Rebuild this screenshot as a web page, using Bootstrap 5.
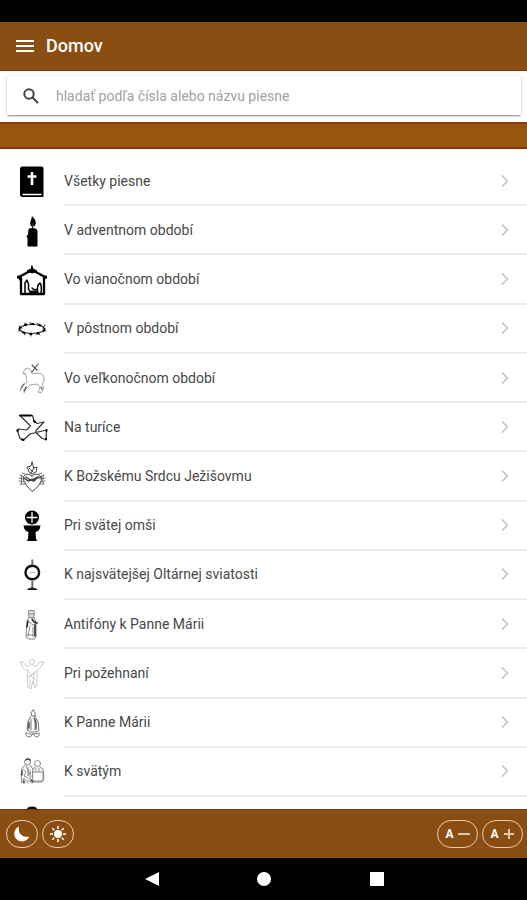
<!DOCTYPE html>
<html lang="sk">
<head>
<meta charset="utf-8">
<meta name="viewport" content="width=device-width, initial-scale=1">
<title>Domov</title>
<link href="https://cdn.jsdelivr.net/npm/bootstrap@5.3.0/dist/css/bootstrap.min.css" rel="stylesheet">
<style>
body{font-family:Roboto,"Noto Sans",sans-serif;font-size:14px;line-height:20px;color:#484848;background:#fff}
.status-strip{height:22px;background:#000}
.brown{background:#8a4d12;color:#fff}
.app-head{height:49px;padding:0 16px;gap:12px;border-bottom:1px solid #7a3205}
.app-title{font-size:18px;line-height:24px;font-weight:500}
.plain-btn{background:none;border:0;padding:0;color:inherit;display:flex}
.search-wrap{padding:5px 6px 7px 7px;height:51px}
.search-box{border-radius:2px;padding:0 16px;gap:17px;box-shadow:0 2px 1px -1px #999,0 1px 3px #bbb}
.search-box input{font-size:14px;line-height:20px;color:#444;outline:0}
.search-box input::placeholder{color:#a2a2a2;opacity:1}
.section-bar{height:27px;background:#99540f;border-top:2px solid #883a08;border-bottom:2px solid #883a08}
.song-list{padding-top:8px}
.song-list li{flex:1 0 49px}
.song-list li:last-child{flex:0 0 12px;overflow:hidden}
.song-link{padding-left:16px;gap:16px;color:inherit}
.song-link .pic{width:32px;height:32px;fill:none;stroke:#000;stroke-linecap:round;stroke-linejoin:round}
.song-label{border-bottom:2px solid #ededed;padding-right:17px}
.chev{width:12px;height:14px;fill:none;stroke:#c2c2c2;stroke-width:1.5}
.app-foot{height:49px;padding:0 4px 0 6px;border-top:1px solid #7a3205}
.round-btn{height:28px;border:1px solid #e9cdb5;border-radius:14px;background:none;color:#fff;padding:0;display:flex;align-items:center;justify-content:center;font-size:12px;font-weight:700;gap:4px}
.mode-btn{width:32px}
.size-btn{width:41px}
.sys-nav{height:42px;background:#000;padding:0 94px 0 96px}
.sys-nav svg{fill:#fff}
</style>
<script src="https://cdn.jsdelivr.net/npm/bootstrap@5.3.0/dist/js/bootstrap.bundle.min.js"></script>
</head>
<body>
<div class="d-flex flex-column vh-100 overflow-hidden">
<div class="status-strip flex-shrink-0"></div>
<header class="brown app-head d-flex align-items-center flex-shrink-0">
<button class="plain-btn" type="button" aria-label="Menu"><svg width="18" height="14" viewBox="0 0 18 14" stroke="#fff" stroke-width="2"><path d="M0 2h18M0 7h18M0 12h18"/></svg></button>
<h1 class="app-title m-0">Domov</h1>
</header>
<form class="search-wrap flex-shrink-0" role="search">
<label class="search-box d-flex align-items-center h-100 bg-white">
<svg width="16" height="16" viewBox="0 0 16 16" fill="none" stroke="#444" stroke-width="2"><circle cx="6" cy="6" r="4.7"/><path d="M9.5 9.5l5.500 5.500"/></svg>
<input class="border-0 p-0 flex-grow-1 bg-transparent" type="text" aria-label="Hľadať pieseň" placeholder="hladať podľa čísla alebo názvu piesne">
</label>
</form>
<div class="section-bar flex-shrink-0"></div>
<main class="flex-grow-1 overflow-hidden d-flex flex-column">
<ul class="song-list list-unstyled m-0 d-flex flex-column flex-grow-1">
<li class="d-flex"><a href="#" class="song-link d-flex align-items-center w-100 text-decoration-none">
<svg class="pic" viewBox="0 0 32 32"><path fill="#000" stroke="none" d="M6 .5h19.500q2 0 2 2V31H6.500Q4 31 4 28V3Q4 .5 6 .5z"/><path stroke="#fff" stroke-width="1.500" d="M6.500 28.500h19" stroke-linecap="butt"/><path stroke="#fff" stroke-width="2.600" d="M16 6v13M11.500 10.500h9" stroke-linecap="butt"/></svg>
<span class="song-label d-flex align-items-center justify-content-between flex-grow-1 align-self-stretch">Všetky piesne<svg class="chev" viewBox="0 0 12 14"><path d="M4 1.500L9.500 7 4 12.500"/></svg></span></a></li>
<li class="d-flex"><a href="#" class="song-link d-flex align-items-center w-100 text-decoration-none">
<svg class="pic" viewBox="0 0 32 32"><path fill="#000" stroke="none" d="M12.500 14q3.500-1.800 8 0l1 2v15.500H11.500V23l-1-1.500 1.500-2z"/><path fill="#000" stroke="none" d="M16 1c4 4 5.500 8 1.500 11l-.5-4-1.300 3.500C12.500 9 15.500 5 16 1z"/><path d="M16.700 9v5"/></svg>
<span class="song-label d-flex align-items-center justify-content-between flex-grow-1 align-self-stretch">V adventnom období<svg class="chev" viewBox="0 0 12 14"><path d="M4 1.500L9.500 7 4 12.500"/></svg></span></a></li>
<li class="d-flex"><a href="#" class="song-link d-flex align-items-center w-100 text-decoration-none">
<svg class="pic" viewBox="0 0 32 32"><path stroke-width="2.300" d="M2 13.500L16 6l14 7.500M5 14v16h23V14"/><path fill="#000" d="M16 2l1 3 4 2-5 2-5-2 4-2z"/><path stroke-width="1.500" d="M2 12l2 4M30 12l-2 4M9 29V19l2-3 1.500 4v5l2 4M16 24q3 3 5 1M22 29c-1-5 0-9 2-10 2 3 1.500 7 1 10"/><path fill="#000" d="M15 27h6v2h-6z"/></svg>
<span class="song-label d-flex align-items-center justify-content-between flex-grow-1 align-self-stretch">Vo vianočnom období<svg class="chev" viewBox="0 0 12 14"><path d="M4 1.500L9.500 7 4 12.500"/></svg></span></a></li>
<li class="d-flex"><a href="#" class="song-link d-flex align-items-center w-100 text-decoration-none">
<svg class="pic" viewBox="0 0 32 32"><ellipse cx="16" cy="16" rx="12.500" ry="4.500" stroke="#444" stroke-width="1.200"/><ellipse cx="16" cy="16" rx="12.500" ry="5" stroke-width="2" stroke-dasharray="3 4" stroke-linecap="butt"/><path stroke-width=".8" d="M3 13l3 2M9 10l1 3M14 9.500l1 2M21 10l2 2M29 12l-2 3M30 18l-3-1M24 22l-2-2M15 23v-3M9 22l-1-3M2.500 18l3-1"/></svg>
<span class="song-label d-flex align-items-center justify-content-between flex-grow-1 align-self-stretch">V pôstnom období<svg class="chev" viewBox="0 0 12 14"><path d="M4 1.500L9.500 7 4 12.500"/></svg></span></a></li>
<li class="d-flex"><a href="#" class="song-link d-flex align-items-center w-100 text-decoration-none">
<svg class="pic" viewBox="0 0 32 32"><g stroke="#999" stroke-width=".9"><path d="M7 10l2-4 3-1 3 2 1 4q5-2 10 0l2 3v5l-2 2 2 4-3 5-3-1 2-4-3-4-7 1-4 4-2 4M8 10l2 3 1 6-5 4-2 5M7 10l3 1"/><path stroke="#555" stroke-width="1.200" d="M16 2l5 5M22 1l-6 8M8 21l-3 4M10 24l-2 4M25 24l1 2"/></g></svg>
<span class="song-label d-flex align-items-center justify-content-between flex-grow-1 align-self-stretch">Vo veľkonočnom období<svg class="chev" viewBox="0 0 12 14"><path d="M4 1.500L9.500 7 4 12.500"/></svg></span></a></li>
<li class="d-flex"><a href="#" class="song-link d-flex align-items-center w-100 text-decoration-none">
<svg class="pic" viewBox="0 0 32 32"><path stroke="#333" stroke-width="1.200" d="M4 3.500L16.500 3.500 18 9 21 11.500 28 10 20 18.500 20 20.500 30.500 18 30 27.500 26 26.500 20 20.500 14 22 7.500 28 4 26.500 1.500 19 2.500 17 10.500 18 14.500 14z"/><path stroke-width="2" d="M4 3.500h11M1.500 18v1M6 27.500l1.500.5M30.500 18v1M30 27v.5M18 9l1 1"/></svg>
<span class="song-label d-flex align-items-center justify-content-between flex-grow-1 align-self-stretch">Na turíce<svg class="chev" viewBox="0 0 12 14"><path d="M4 1.500L9.500 7 4 12.500"/></svg></span></a></li>
<li class="d-flex"><a href="#" class="song-link d-flex align-items-center w-100 text-decoration-none">
<svg class="pic" viewBox="0 0 32 32"><g stroke="#444" stroke-width="1"><path d="M16 15c-4-4-10-1-8.500 4q2 5.500 8.500 11.500Q24 25 25.500 19C27 14 20 11 16 15z"/><path stroke-width="1.500" d="M8 17l4 3 3-1 3 1 3-3 4-1M10 16l4 3 4-1 4-2"/><path d="M16 1l-1 4-4 1 2 5 3 2 4-2 1-5-3 1zM13 7l4 4M18 7l-3 5"/></g><path stroke="#777" stroke-width="1" d="M4 14l4 2M3 17l5 1M3 20l6 1M4 23l6 0M6 12l3 1M28 14l-4 2M29 17l-5 1M29 20l-5 1M28 23l-5 0M26 12l-3 1M5.500 14v9M27 14v9"/></svg>
<span class="song-label d-flex align-items-center justify-content-between flex-grow-1 align-self-stretch">K Božskému Srdcu Ježišovmu<svg class="chev" viewBox="0 0 12 14"><path d="M4 1.500L9.500 7 4 12.500"/></svg></span></a></li>
<li class="d-flex"><a href="#" class="song-link d-flex align-items-center w-100 text-decoration-none">
<svg class="pic" viewBox="0 0 32 32"><circle cx="16" cy="7.500" r="7" fill="#000" stroke="none"/><path stroke="#fff" stroke-width="1.300" d="M16 2.500v10M11 7.500h10"/><path fill="#000" stroke="none" d="M7.500 15.500h17c-.5 4-2 6-5 6.500l.5 7 1.500 2h-11l1.500-2 .5-7c-3-.5-4.500-2.500-5-6.500z"/></svg>
<span class="song-label d-flex align-items-center justify-content-between flex-grow-1 align-self-stretch">Pri svätej omši<svg class="chev" viewBox="0 0 12 14"><path d="M4 1.500L9.500 7 4 12.500"/></svg></span></a></li>
<li class="d-flex"><a href="#" class="song-link d-flex align-items-center w-100 text-decoration-none">
<svg class="pic" viewBox="0 0 32 32"><circle cx="16.300" cy="13.500" r="6.800" stroke="#111" stroke-width="2.400"/><path stroke="#666" stroke-width="1.800" d="M16.300 .5v5M16.300 21.500v8" stroke-linecap="butt"/><path stroke="#999" stroke-width=".8" d="M14 13.500h5"/><path fill="#222" stroke="none" d="M11 31q1-2.500 5.300-2.500t5.300 2.500z"/></svg>
<span class="song-label d-flex align-items-center justify-content-between flex-grow-1 align-self-stretch">K najsvätejšej Oltárnej sviatosti<svg class="chev" viewBox="0 0 12 14"><path d="M4 1.500L9.500 7 4 12.500"/></svg></span></a></li>
<li class="d-flex"><a href="#" class="song-link d-flex align-items-center w-100 text-decoration-none">
<svg class="pic" viewBox="0 0 32 32"><g stroke="#888" stroke-width="1"><path fill="#ddd" d="M13 1.500h5l.5 4-1 3h-4l-1-3z"/><path d="M13 8l-2 4-1 16 3 2h6l1-3V14l-2-6M13 13l4 3 4-2M14 17l-2 10M17 18v10M13 5h5M11 26h7"/></g><path stroke="#222" stroke-width="1.500" d="M19 16v11M12 12l-1 6M16 10l2 3 3 1"/></svg>
<span class="song-label d-flex align-items-center justify-content-between flex-grow-1 align-self-stretch">Antifóny k Panne Márii<svg class="chev" viewBox="0 0 12 14"><path d="M4 1.500L9.500 7 4 12.500"/></svg></span></a></li>
<li class="d-flex"><a href="#" class="song-link d-flex align-items-center w-100 text-decoration-none">
<svg class="pic" viewBox="0 0 32 32"><g stroke="#c4c4c4" stroke-width=".9"><circle cx="16" cy="4" r="2.500"/><path d="M14 7l-3 2-4-5-3 0 3 6 5 3-1 7 1 9 3 2 2-8 2 7 2-3V13l4-4 3-5-4 0-4 5-3-2M12 13l4 4 4-4M13 18l5-2M12 21l3-3 3 3M14 22v7M18 14v9"/></g></svg>
<span class="song-label d-flex align-items-center justify-content-between flex-grow-1 align-self-stretch">Pri požehnaní<svg class="chev" viewBox="0 0 12 14"><path d="M4 1.500L9.500 7 4 12.500"/></svg></span></a></li>
<li class="d-flex"><a href="#" class="song-link d-flex align-items-center w-100 text-decoration-none">
<svg class="pic" viewBox="0 0 32 32"><g stroke="#777" stroke-width="1"><path d="M17 3l-2 3 1 3h3V6zM15 9l-3 5-1 9 3 2h6l3-2-1-8-3-6"/><path d="M10 26q-1 4 4 4l3-3 3 3q4 0 3-4l-4 1h-6zM15 12v11M19 13v10M13 17l-1 6"/></g><path stroke="#444" stroke-width="1.300" d="M18 11l2 4v7M13 15v6"/></svg>
<span class="song-label d-flex align-items-center justify-content-between flex-grow-1 align-self-stretch">K Panne Márii<svg class="chev" viewBox="0 0 12 14"><path d="M4 1.500L9.500 7 4 12.500"/></svg></span></a></li>
<li class="d-flex"><a href="#" class="song-link d-flex align-items-center w-100 text-decoration-none">
<svg class="pic" viewBox="0 0 32 32"><g stroke="#888" stroke-width="1"><circle cx="11.500" cy="6" r="3"/><circle cx="21.500" cy="7.500" r="3"/><path d="M9 9l-3 3-1 7 1 8 2-5 4 5M14 9l3 4-1 9M10 10l3 7M7 13l3 3-2 4 4 2M19 11l-2 3M24 11l3 2 1 9-2 4h-8l-3-2M17 16h10v9H17zM12 24l4 3M15 17l-3 2M12 12v8M14 14v9M20 12v3M23 12v3"/></g><path stroke="#444" stroke-width="1.500" d="M8 25v2M10 4q2-2 4 0M15 24l2 2M6 15v4"/></svg>
<span class="song-label d-flex align-items-center justify-content-between flex-grow-1 align-self-stretch">K svätým<svg class="chev" viewBox="0 0 12 14"><path d="M4 1.500L9.500 7 4 12.500"/></svg></span></a></li>
<li><a href="#" class="song-link d-flex pt-2 text-decoration-none" aria-label="Ďalšie piesne"><svg class="pic flex-shrink-0" viewBox="0 0 32 32"><path fill="#111" stroke="none" d="M11 32V4q0-2.500 5-2.500T21 4v28z"/></svg></a></li>
</ul>
</main>
<footer class="brown app-foot d-flex align-items-center justify-content-between flex-shrink-0">
<div class="d-flex gap-1">
<button class="round-btn mode-btn" type="button" aria-label="Tmavý režim"><svg width="16" height="16" viewBox="0 0 16 16"><path fill="#fff" d="M5 .5C3.500 7 8 12 15.500 10.500 13.500 15 8 17 3.500 14-1.500 10.500-.5 3 5 .5z"/></svg></button>
<button class="round-btn mode-btn" type="button" aria-label="Svetlý režim"><svg width="16" height="16" viewBox="0 0 16 16" stroke="#fff" stroke-width="1.500"><circle cx="8" cy="8" r="3.200" fill="#fff"/><path d="M8 0v3M8 13v3M0 8h3M13 8h3M2.300 2.300l2 2M11.700 11.700l2 2M2.300 13.700l2-2M11.700 4.300l2-2"/></svg></button>
</div>
<div class="d-flex gap-1">
<button class="round-btn size-btn" type="button" aria-label="Zmenšiť písmo">A<svg width="12" height="12" viewBox="0 0 12 12" stroke="#dfc4ad" stroke-width="2"><path d="M0 6h12"/></svg></button>
<button class="round-btn size-btn" type="button" aria-label="Zväčšiť písmo">A<svg width="12" height="12" viewBox="0 0 12 12" stroke="#dfc4ad" stroke-width="2"><path d="M1 6h10M6 1v10"/></svg></button>
</div>
</footer>
<nav class="sys-nav d-flex align-items-center justify-content-around flex-shrink-0" aria-label="Systém">
<button class="plain-btn" type="button" aria-label="Späť"><svg width="14" height="14" viewBox="0 0 14 14"><path d="M0 7L14 0v14z"/></svg></button>
<button class="plain-btn" type="button" aria-label="Domov"><svg width="14" height="14" viewBox="0 0 14 14"><circle cx="7" cy="7" r="7"/></svg></button>
<button class="plain-btn" type="button" aria-label="Prehľad"><svg width="14" height="14" viewBox="0 0 14 14"><path d="M0 0h14v14H0z"/></svg></button>
</nav>
</div>
</body>
</html>
